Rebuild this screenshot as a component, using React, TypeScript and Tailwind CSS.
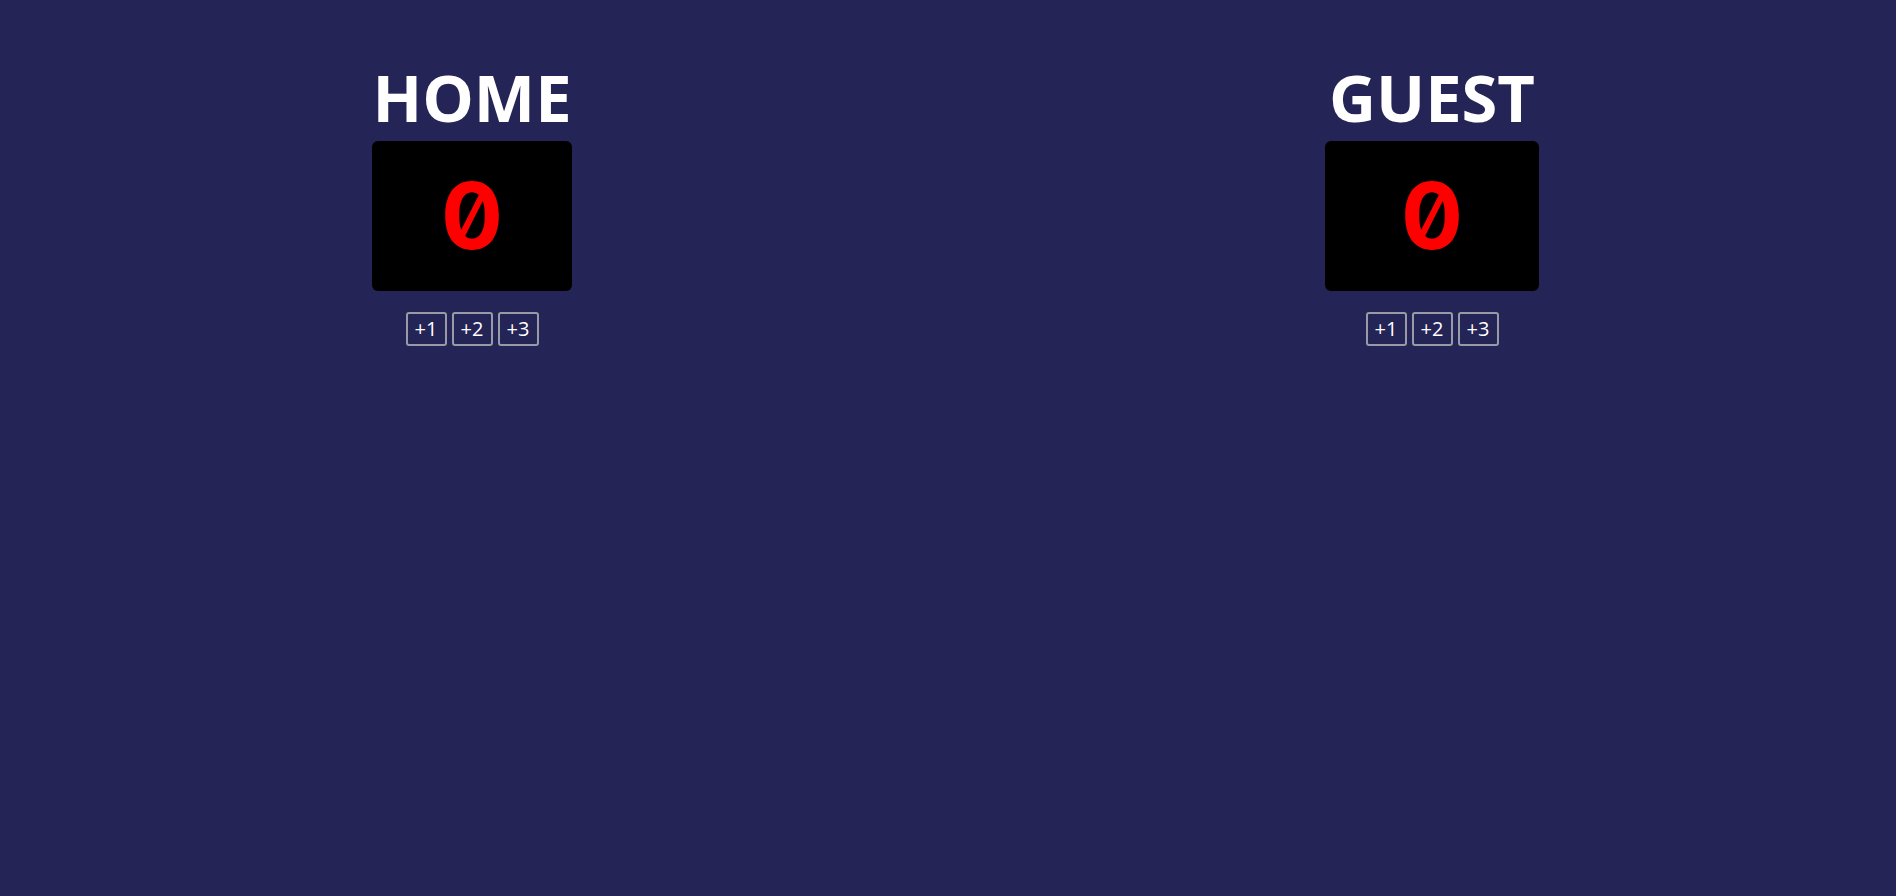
import { useState } from "react";

function Team({ name, boxWidth }: { name: string; boxWidth: string }) {
  const [score, setScore] = useState(0);

  return (
    <div className="flex flex-col items-center">
      <h1 className="font-['Open_Sans',sans-serif] text-[65px] font-bold leading-[87px] text-white">
        {name}
      </h1>
      <div
        className={`${boxWidth} flex h-[150px] items-center justify-center rounded-[6px] bg-black`}
      >
        <span className="font-['Inter',sans-serif] text-[92px] font-bold leading-none text-[#ff0000] slashed-zero">
          {score}
        </span>
      </div>
      <div className="mt-[21px] flex gap-[5px]">
        {[1, 2, 3].map((n) => (
          <button
            key={n}
            onClick={() => setScore((s) => s + n)}
            className="h-[34px] w-[41px] rounded-[3px] border-2 border-[#9a9aa6] font-['Open_Sans',sans-serif] text-[20px] leading-none text-white"
          >
            +{n}
          </button>
        ))}
      </div>
    </div>
  );
}

export default function App() {
  return (
    <div className="min-h-screen w-full bg-[#252457]">
      <div className="flex items-start gap-[753px] pl-[372px] pt-[54px]">
        <Team name="HOME" boxWidth="w-[200px]" />
        <Team name="GUEST" boxWidth="w-[214px]" />
      </div>
    </div>
  );
}
